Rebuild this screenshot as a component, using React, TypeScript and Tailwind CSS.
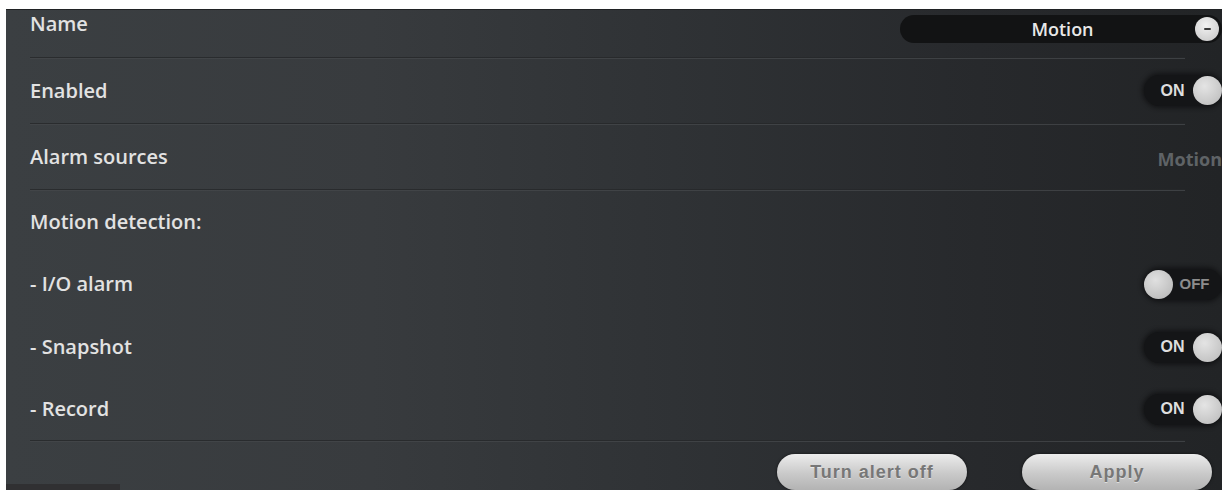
import React from "react"

const labelFont = { fontFamily: '"Open Sans", "Noto Sans", sans-serif' }
const boldFont = { fontFamily: '"Liberation Sans", Arial, sans-serif' }

function Separator() {
  return (
    <div className="ml-[24px] mr-[37px] h-[2px] border-t border-[#26282a] border-b border-b-[#44474a] opacity-80" />
  )
}

function Label({ children, className = "" }: { children: React.ReactNode; className?: string }) {
  return (
    <span style={labelFont} className={`text-[20px] font-semibold text-[#e2e2e2] ${className}`}>
      {children}
    </span>
  )
}

/** Pill switch — knob sits right when on, left when off. */
function Toggle({ on }: { on: boolean }) {
  return (
    <div className="flex h-[31px] w-[78px] shrink-0 items-center rounded-full bg-[#141517] shadow-[0_0_4px_2px_rgba(10,10,12,0.6)]">
      {on ? (
        <>
          <span style={boldFont} className="flex-1 pl-[8px] text-center text-[16px] font-bold text-[#dedede]">
            ON
          </span>
          <span className="h-[29px] w-[29px] rounded-full bg-[radial-gradient(circle_at_40%_35%,#e4e4e4,#b9b9b9)]" />
        </>
      ) : (
        <>
          <span className="h-[29px] w-[29px] rounded-full bg-[radial-gradient(circle_at_40%_35%,#e0e0e0,#b4b4b4)]" />
          <span style={boldFont} className="flex-1 pr-[6px] text-center text-[15px] font-bold text-[#8c8c8c]">
            OFF
          </span>
        </>
      )}
    </div>
  )
}

function Row({ height, children, right }: { height: string; children: React.ReactNode; right?: React.ReactNode }) {
  return (
    <div className={`flex items-center justify-between pl-[24px] ${height}`}>
      {children}
      {right}
    </div>
  )
}

function PillButton({ children }: { children: React.ReactNode }) {
  return (
    <button
      type="button"
      style={boldFont}
      className="h-[36px] w-[190px] rounded-full bg-[linear-gradient(to_bottom,#ececec,#c9c9c9_55%,#b3b3b3)] text-[18px] font-bold tracking-[1px] text-[#777777] [text-shadow:0_1px_0_rgba(255,255,255,0.5)] shadow-[0_0_3px_rgba(0,0,0,0.6)]"
    >
      {children}
    </button>
  )
}

export default function App() {
  return (
    <div className="h-[490px] w-[1226px] overflow-hidden bg-white pl-[6px] pr-[4px] pt-[9px]">
      <div className="flex h-[481px] flex-col overflow-hidden border-t border-[#202224] bg-[linear-gradient(to_right,#3b3f42_0%,#383b3e_30%,#2f3235_55%,#27292c_80%,#222426_100%)]">
        {/* Name */}
        <div className="flex h-[47px] justify-between pl-[24px]">
          <Label className="block leading-[27px]">Name</Label>
          <div className="mt-[5px] flex h-[28px] w-[322px] items-center rounded-full bg-[#121314]">
            <span style={labelFont} className="flex-1 pl-[30px] text-center text-[18px] font-semibold text-[#e8e8e8]">
              Motion
            </span>
            <span className="mr-[3px] flex h-[24px] w-[24px] items-center justify-center rounded-full bg-[radial-gradient(circle_at_45%_35%,#f2f2f2,#c4c4c4)]">
              <span className="h-[2px] w-[7px] rounded-full bg-[#3a3a3a]" />
            </span>
          </div>
        </div>
        <Separator />

        <Row height="h-[64px]" right={<Toggle on />}>
          <Label>Enabled</Label>
        </Row>
        <Separator />

        <Row
          height="h-[64px]"
          right={
            <span style={labelFont} className="mt-[6px] whitespace-nowrap text-[18px] font-bold text-[#5f6366]">
              Motion
            </span>
          }
        >
          <Label>Alarm sources</Label>
        </Row>
        <Separator />

        <Row height="h-[62px]">
          <Label>Motion detection:</Label>
        </Row>
        <Row height="h-[64px]" right={<Toggle on={false} />}>
          <Label>- I/O alarm</Label>
        </Row>
        <Row height="h-[62px]" right={<Toggle on />}>
          <Label>- Snapshot</Label>
        </Row>
        <Row height="h-[62px]" right={<Toggle on />}>
          <Label>- Record</Label>
        </Row>
        <Separator />

        {/* Actions */}
        <div className="flex flex-1 items-start pt-[12px]">
          <div className="mt-auto h-[6px] w-[114px] bg-[#303032]" />
          <div className="ml-auto flex gap-[55px] pr-[10px]">
            <PillButton>Turn alert off</PillButton>
            <PillButton>Apply</PillButton>
          </div>
        </div>
      </div>
    </div>
  )
}
